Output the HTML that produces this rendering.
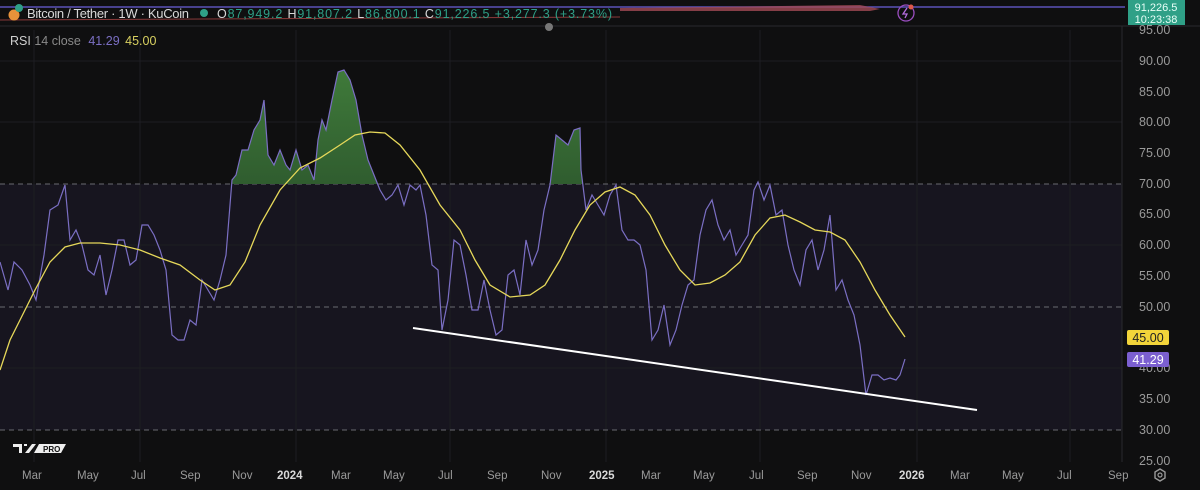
<!DOCTYPE html><html><head><style>
body{margin:0;background:#0f0f10;width:1200px;height:490px;overflow:hidden;font-family:"Liberation Sans",sans-serif}
</style></head><body>
<svg width="1200" height="490" xmlns="http://www.w3.org/2000/svg" style="position:absolute;left:0;top:0" font-family="Liberation Sans">
<defs>
<linearGradient id="g" x1="0" y1="0" x2="0" y2="1"><stop offset="0" stop-color="#3f7a3a"/><stop offset="1" stop-color="#13261a"/></linearGradient>
<clipPath id="c"><rect x="0" y="0" width="1122" height="184"/></clipPath>
</defs>
<rect width="1200" height="490" fill="#0f0f10"/>
<rect x="0" y="184" width="1122" height="246" fill="#17151f"/>
<g stroke="#1e1e22" stroke-width="1">
<line x1="34" y1="30" x2="34" y2="462"/><line x1="140" y1="30" x2="140" y2="462"/><line x1="296" y1="30" x2="296" y2="462"/><line x1="450" y1="30" x2="450" y2="462"/><line x1="606" y1="30" x2="606" y2="462"/><line x1="760" y1="30" x2="760" y2="462"/><line x1="917" y1="30" x2="917" y2="462"/><line x1="1070" y1="30" x2="1070" y2="462"/>
<line x1="0" y1="61" x2="1122" y2="61"/><line x1="0" y1="122" x2="1122" y2="122"/><line x1="0" y1="245" x2="1122" y2="245"/><line x1="0" y1="368" x2="1122" y2="368"/>
</g>
<line x1="1122" y1="26" x2="1122" y2="462" stroke="#2a2a2e"/>
<g stroke="#6a6a70" stroke-dasharray="5,4" stroke-width="1">
<line x1="0" y1="184" x2="1122" y2="184"/><line x1="0" y1="307" x2="1122" y2="307"/><line x1="0" y1="430" x2="1122" y2="430"/>
</g>
<path clip-path="url(#c)" fill="url(#g)" d="M0,184 L0,262 8,290 14,262 22,270 30,285 36,300 44,255 50,210 58,205 65,185 70,240 76,230 82,245 88,270 94,275 100,255 106,295 112,270 118,240 124,240 130,265 136,260 142,225 148,225 154,235 160,250 166,270 172,335 178,340 184,340 190,320 196,325 202,280 208,290 214,300 220,280 226,255 232,180 236,175 242,150 248,150 254,130 260,120 264,100 268,155 274,165 280,150 286,165 290,170 296,150 302,170 308,165 314,180 318,140 322,120 326,130 332,100 338,72 344,70 350,80 356,100 362,135 368,160 374,175 380,190 386,200 392,195 398,185 404,205 410,185 416,190 420,185 426,215 432,265 438,270 442,330 448,300 454,240 460,245 466,275 472,310 478,310 484,280 490,310 496,335 502,330 508,275 514,270 520,295 526,240 532,265 538,250 544,210 550,185 556,135 562,140 568,145 574,130 580,128 581,170 586,210 592,195 598,205 604,215 610,195 616,185 622,230 628,240 634,240 640,245 646,270 652,340 658,330 664,305 670,345 676,330 682,305 688,285 694,280 700,235 706,210 712,200 718,225 724,240 730,230 736,255 742,245 748,235 754,190 758,182 764,200 770,185 776,215 782,210 788,245 794,270 800,285 806,250 812,240 818,270 824,250 830,215 836,290 842,280 848,300 854,315 860,345 866,395 872,375 878,375 884,380 890,378 896,380 900,375 905,359 L905,184Z"/>
<polyline fill="none" stroke="#7b6fc4" stroke-width="1.2" points="0,262 8,290 14,262 22,270 30,285 36,300 44,255 50,210 58,205 65,185 70,240 76,230 82,245 88,270 94,275 100,255 106,295 112,270 118,240 124,240 130,265 136,260 142,225 148,225 154,235 160,250 166,270 172,335 178,340 184,340 190,320 196,325 202,280 208,290 214,300 220,280 226,255 232,180 236,175 242,150 248,150 254,130 260,120 264,100 268,155 274,165 280,150 286,165 290,170 296,150 302,170 308,165 314,180 318,140 322,120 326,130 332,100 338,72 344,70 350,80 356,100 362,135 368,160 374,175 380,190 386,200 392,195 398,185 404,205 410,185 416,190 420,185 426,215 432,265 438,270 442,330 448,300 454,240 460,245 466,275 472,310 478,310 484,280 490,310 496,335 502,330 508,275 514,270 520,295 526,240 532,265 538,250 544,210 550,185 556,135 562,140 568,145 574,130 580,128 581,170 586,210 592,195 598,205 604,215 610,195 616,185 622,230 628,240 634,240 640,245 646,270 652,340 658,330 664,305 670,345 676,330 682,305 688,285 694,280 700,235 706,210 712,200 718,225 724,240 730,230 736,255 742,245 748,235 754,190 758,182 764,200 770,185 776,215 782,210 788,245 794,270 800,285 806,250 812,240 818,270 824,250 830,215 836,290 842,280 848,300 854,315 860,345 866,395 872,375 878,375 884,380 890,378 896,380 900,375 905,359"/>
<polyline fill="none" stroke="#e6d85a" stroke-width="1.3" points="0,370 10,340 20,320 35,290 50,262 65,247 80,243 100,243 120,245 140,250 160,258 180,265 200,280 215,290 230,285 245,262 260,225 280,190 300,168 320,158 340,145 355,135 370,132 385,133 400,145 420,170 440,205 460,230 475,260 490,285 510,297 530,295 545,285 560,260 575,230 590,205 605,192 620,187 635,195 650,215 665,245 680,270 695,285 710,283 725,275 740,262 755,235 770,218 785,215 800,222 815,230 830,232 845,240 860,262 875,290 890,315 905,337"/>
<line x1="413" y1="328" x2="977" y2="410" stroke="#ffffff" stroke-width="2"/>
<line x1="0" y1="7" x2="1125" y2="7" stroke="#5b52b8" stroke-width="1.5"/>
<line x1="0" y1="20" x2="620" y2="17" stroke="#8a3a3a" stroke-width="1"/>
<line x1="0" y1="26" x2="1200" y2="26" stroke="#2a2a2e"/>
<path d="M620,8 L860,5 L880,9 L870,11 L620,11Z" fill="#a34a55" opacity="0.8"/>
<circle cx="906" cy="13" r="8" fill="none" stroke="#9a4ec0" stroke-width="1.3"/>
<path d="M907,8 L903,14 L907,14 L905,18" stroke="#b56de0" fill="none" stroke-width="1.3"/>
<circle cx="911" cy="7" r="2.5" fill="#e0584a"/>
<rect x="1128" y="0" width="57" height="25" fill="#2fa087"/>
<text x="1156" y="11" fill="#e8fff8" font-size="11" text-anchor="middle">91,226.5</text>
<text x="1156" y="23" fill="#e8fff8" font-size="11" text-anchor="middle">10:23:38</text>
<circle cx="549" cy="27" r="4" fill="#777"/>
<circle cx="14" cy="15" r="5.5" fill="#e8923a"/>
<circle cx="19" cy="8" r="4" fill="#2fa087"/>
<text x="27" y="18" fill="#d8d8d8" font-size="13" textLength="162">Bitcoin / Tether · 1W · KuCoin</text>
<circle cx="204" cy="13" r="4" fill="#2fa087"/>
<text x="217" y="18" font-size="12.5" fill="#2fa087" textLength="395"><tspan fill="#d8d8d8">O</tspan>87,949.2 <tspan fill="#d8d8d8">H</tspan>91,807.2 <tspan fill="#d8d8d8">L</tspan>86,800.1 <tspan fill="#d8d8d8">C</tspan>91,226.5 +3,277.3 (+3.73%)</text>
<text x="10" y="45" font-size="12.5" fill="#cfcfcf">RSI <tspan fill="#8a8a8a">14 close</tspan> <tspan fill="#7b6fc4" dx="4">41.29</tspan> <tspan fill="#d8d060" dx="2">45.00</tspan></text>
<g fill="#9a9a9a" font-size="12.5">
<text x="1139" y="34">95.00</text><text x="1139" y="65">90.00</text><text x="1139" y="96">85.00</text><text x="1139" y="126">80.00</text><text x="1139" y="157">75.00</text><text x="1139" y="188">70.00</text><text x="1139" y="218">65.00</text><text x="1139" y="249">60.00</text><text x="1139" y="280">55.00</text><text x="1139" y="311">50.00</text><text x="1139" y="372">40.00</text><text x="1139" y="403">35.00</text><text x="1139" y="434">30.00</text><text x="1139" y="465">25.00</text>
</g>
<rect x="1127" y="330" width="42" height="15" rx="2" fill="#f2d43a"/>
<text x="1148" y="342" font-size="12.5" fill="#222" text-anchor="middle">45.00</text>
<rect x="1127" y="352" width="42" height="15" rx="2" fill="#7b5fd0"/>
<text x="1148" y="364" font-size="12.5" fill="#fff" text-anchor="middle">41.29</text>
<path d="M13,444 h9 v9 h-3 v-6 h-6z M24,444 h3 v2 h-3z M32,444 h4 l-7,9 h-4z" fill="#eee"/>
<path d="M39,444 h27 l-5,9 h-27z" fill="#eee"/>
<text x="43" y="452" font-size="8" font-weight="bold" fill="#111">PRO</text>
<path d="M1160,469 l5,3 v6 l-5,3 l-5,-3 v-6z" fill="none" stroke="#9a9a9a" stroke-width="1.4"/>
<circle cx="1160" cy="475" r="2" fill="none" stroke="#9a9a9a" stroke-width="1.2"/>
</svg>
<div style="position:absolute;left:0;top:470px;width:1200px;height:20px;font:11.5px 'Liberation Sans',sans-serif;color:#9a9a9a">
<span style="position:absolute;left:22px">Mar</span><span style="position:absolute;left:77px">May</span><span style="position:absolute;left:131px">Jul</span><span style="position:absolute;left:180px">Sep</span><span style="position:absolute;left:232px">Nov</span><span style="position:absolute;left:277px;font-weight:bold;color:#d8d8d8">2024</span><span style="position:absolute;left:331px">Mar</span><span style="position:absolute;left:383px">May</span><span style="position:absolute;left:438px">Jul</span><span style="position:absolute;left:487px">Sep</span><span style="position:absolute;left:541px">Nov</span><span style="position:absolute;left:589px;font-weight:bold;color:#d8d8d8">2025</span><span style="position:absolute;left:641px">Mar</span><span style="position:absolute;left:693px">May</span><span style="position:absolute;left:749px">Jul</span><span style="position:absolute;left:797px">Sep</span><span style="position:absolute;left:851px">Nov</span><span style="position:absolute;left:899px;font-weight:bold;color:#d8d8d8">2026</span><span style="position:absolute;left:950px">Mar</span><span style="position:absolute;left:1002px">May</span><span style="position:absolute;left:1057px">Jul</span><span style="position:absolute;left:1108px">Sep</span>
</div>
</body></html>
